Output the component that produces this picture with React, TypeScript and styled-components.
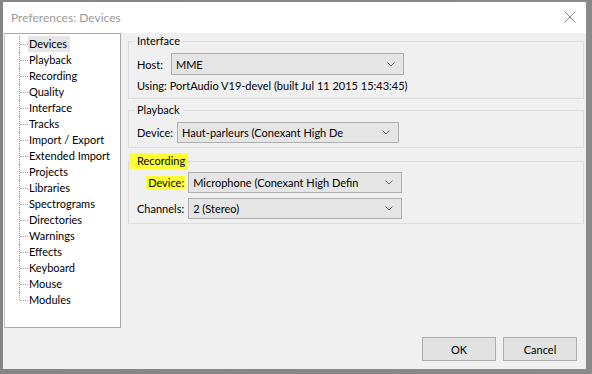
import React from 'react';
import styled, { createGlobalStyle, css } from 'styled-components';

const GlobalStyle = createGlobalStyle`
  html, body {
    margin: 0;
    padding: 0;
    background: #868686;
  }
  body {
    font-family: Lato, "Liberation Sans", sans-serif;
    font-size: 11px;
    color: #000;
  }
`;

// Styles
const Screen = styled.div`
  width: 592px;
  height: 374px;
  padding: 2px 6px 5px 3px;
  box-sizing: border-box;
  background: linear-gradient(90deg, #858585 0%, #8a8a8a 100%);
`;

const Window = styled.div`
  width: 583px;
  height: 367px;
  display: flex;
  flex-direction: column;
  background: #f0f0f0;
`;

const TitleBar = styled.div`
  height: 31px;
  flex: none;
  display: flex;
  align-items: center;
  justify-content: space-between;
  padding: 0 10px 0 8px;
  background: #fff;
  color: #9a9a9a;
  font-size: 12px;
`;

const CloseIcon = styled.svg`
  width: 12px;
  height: 12px;
  margin-bottom: 2px;
`;

const Body = styled.div`
  flex: 1;
  display: flex;
  flex-direction: column;
`;

const Main = styled.div`
  flex: 1;
  display: flex;
  padding-left: 1px;
  min-height: 0;
`;

const Tree = styled.ul`
  list-style: none;
  margin: 0;
  padding: 2px 0 0 0;
  width: 117px;
  box-sizing: border-box;
  background: #fff;
  border: 1px solid #a9a9a9;
  border-left-color: #c8c8c8;
  flex: none;
`;

const TreeItem = styled.li<{ $last?: boolean }>`
  position: relative;
  height: 16px;
  line-height: 16px;
  padding-left: 23px;
  white-space: nowrap;

  &:before {
    content: '';
    position: absolute;
    left: 14px;
    top: 0;
    height: ${(p) => (p.$last ? '8px' : '16px')};
    border-left: 1px dotted #a0a0a0;
  }

  &:after {
    content: '';
    position: absolute;
    left: 15px;
    top: 8px;
    width: 8px;
    border-top: 1px dotted #a0a0a0;
  }
`;

const ItemText = styled.span<{ $selected?: boolean }>`
  display: inline-block;
  padding: 0 1px;
  ${(p) =>
    p.$selected &&
    css`
      padding-right: 3px;
      background: #e6e6e6;
    `}
`;

const Panel = styled.div`
  flex: 1;
  display: flex;
  flex-direction: column;
  padding: 0 2px 0 7px;
`;

const Group = styled.fieldset<{ $gap: number; $top?: number }>`
  margin: ${(p) => p.$gap}px 0 0 0;
  padding: ${(p) => p.$top ?? 4}px 0 4px 8px;
  border: 1px solid #dcdcdc;
  display: flex;
  flex-direction: column;
  gap: 3px;
`;

const Legend = styled.legend<{ $marked?: boolean }>`
  line-height: 16px;
  margin-left: -3px;
  padding: 0 3px;
  ${(p) =>
    p.$marked &&
    css`
      margin-left: -8px;
      padding: 0 3px 0 8px;
      background: #ffff33;
    `}
`;

const Row = styled.div<{ $gap: number }>`
  display: flex;
  align-items: center;
  gap: ${(p) => p.$gap}px;
`;

const FieldGrid = styled.div`
  display: grid;
  grid-template-columns: auto auto;
  justify-content: start;
  align-items: center;
  column-gap: 2px;
  row-gap: 5px;
`;

const Label = styled.span<{ $marked?: boolean }>`
  justify-self: end;
  line-height: 13px;
  padding: 0 2px;
  margin-left: -2px;
  ${(p) =>
    p.$marked &&
    css`
      background: #ffff33;
    `}
`;

const Combo = styled.div<{ $width: number }>`
  width: ${(p) => p.$width}px;
  height: 21px;
  box-sizing: border-box;
  display: flex;
  align-items: center;
  gap: 4px;
  padding: 0 8px 0 4px;
  background: #e5e5e5;
  border: 1px solid #adadad;
  white-space: nowrap;
`;

const ComboText = styled.span`
  flex: 1;
  min-width: 0;
  overflow: hidden;
`;

const Chevron = styled.svg`
  width: 8px;
  height: 5px;
  flex: none;
`;

const Info = styled.div`
  line-height: 16px;
`;

const Footer = styled.div`
  flex: none;
  display: flex;
  justify-content: flex-end;
  gap: 7px;
  padding: 9px 9px 8px 0;
`;

const Button = styled.button`
  width: 74px;
  height: 24px;
  font: inherit;
  color: #000;
  background: #e1e1e1;
  border: 1px solid #adadad;
  padding: 0;
`;

const pages = [
  'Devices',
  'Playback',
  'Recording',
  'Quality',
  'Interface',
  'Tracks',
  'Import / Export',
  'Extended Import',
  'Projects',
  'Libraries',
  'Spectrograms',
  'Directories',
  'Warnings',
  'Effects',
  'Keyboard',
  'Mouse',
  'Modules',
];

const Select: React.FC<{ width: number; value: string; height?: number }> = ({ width, value, height }) => (
  <Combo $width={width} style={height ? { height } : undefined}>
    <ComboText>{value}</ComboText>
    <Chevron viewBox="0 0 8 5">
      <path d="M0.5 0.5 L4 4 L7.5 0.5" fill="none" stroke="#666" strokeWidth="1" />
    </Chevron>
  </Combo>
);

const App: React.FC = () => {
  return (
    <>
      <GlobalStyle />
      <Screen>
        <Window>
          <TitleBar>
            <span>Preferences: Devices</span>
            <CloseIcon viewBox="0 0 12 12">
              <path d="M0.5 0.5 L11.5 11.5 M11.5 0.5 L0.5 11.5" stroke="#8a8a8a" strokeWidth="1" />
            </CloseIcon>
          </TitleBar>
          <Body>
            <Main>
              <Tree>
                {pages.map((name, i) => (
                  <TreeItem key={name} $last={i === pages.length - 1}>
                    <ItemText $selected={i === 0}>{name}</ItemText>
                  </TreeItem>
                ))}
              </Tree>
              <Panel>
                <Group $gap={0}>
                  <Legend>Interface</Legend>
                  <Row $gap={8}>
                    <span>Host:</span>
                    <Select width={233} value="MME" height={22} />
                  </Row>
                  <Info>Using: PortAudio V19-devel (built Jul 11 2015 15:43:45)</Info>
                </Group>
                <Group $gap={3}>
                  <Legend>Playback</Legend>
                  <Row $gap={4}>
                    <span>Device:</span>
                    <Select width={222} value="Haut-parleurs (Conexant High De" />
                  </Row>
                </Group>
                <Group $gap={5} $top={3}>
                  <Legend $marked>Recording</Legend>
                  <FieldGrid>
                    <Label $marked>Device:</Label>
                    <Select width={214} value="Microphone (Conexant High Defin" />
                    <Label>Channels:</Label>
                    <Select width={214} value="2 (Stereo)" />
                  </FieldGrid>
                </Group>
              </Panel>
            </Main>
            <Footer>
              <Button>OK</Button>
              <Button>Cancel</Button>
            </Footer>
          </Body>
        </Window>
      </Screen>
    </>
  );
};

export default App;
